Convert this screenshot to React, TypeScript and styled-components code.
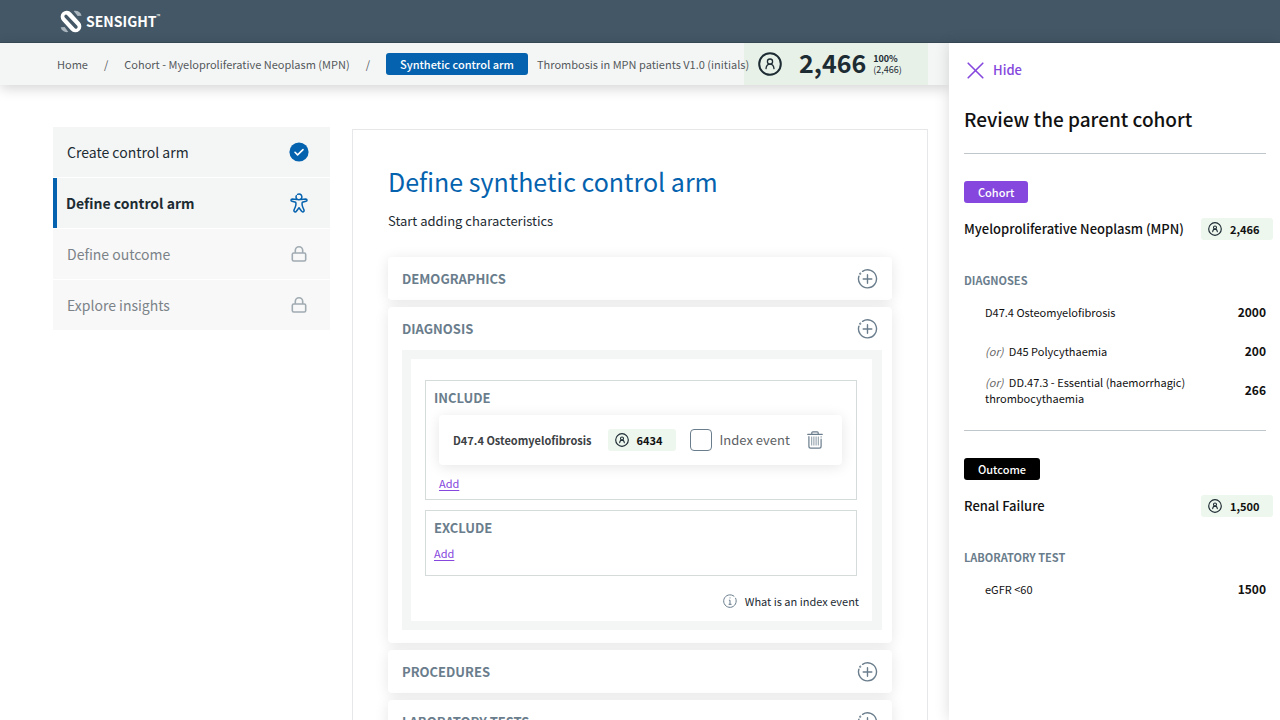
import React from 'react';
import styled, { createGlobalStyle, css } from 'styled-components';

const color = {
  header: '#435766',
  blue: '#0562ae',
  purple: '#8547dd',
  ink: '#1d2b33',
  slate: '#6a7d8c',
  mist: '#f4f6f6',
  mint: '#edf7ed',
  rule: '#bfc7ca',
};

const GlobalStyle = createGlobalStyle`
  *, *::before, *::after { box-sizing: border-box; }
  body {
    margin: 0;
    background: #fff;
    color: ${color.ink};
    font-family: 'Noto Sans CJK SC', 'Noto Sans', sans-serif;
    font-size: 11px;
    line-height: 16px;
  }
  h1, h2, h3, h4, p, ul, ol { margin: 0; padding: 0; }
  ul, ol { list-style: none; }
  a { color: inherit; text-decoration: none; }
  button {
    font: inherit;
    color: inherit;
    background: none;
    border: 0;
    padding: 0;
    cursor: pointer;
    text-align: left;
  }
  svg { display: block; flex: none; }
`;

const Shell = styled.div`
  display: grid;
  grid-template-rows: auto minmax(0, 1fr);
  height: 100vh;
`;

const Header = styled.header`
  display: flex;
  align-items: center;
  height: 43px;
  padding-left: 60px;
  background: ${color.header};
  border-bottom: 1px solid #3a4c59;
`;

const Brand = styled.a`
  display: flex;
  align-items: center;
  gap: 4px;
  color: #fff;
  font-size: 14px;
  font-weight: 700;
`;

const Trademark = styled.sup`
  align-self: flex-start;
  margin-left: -4px;
  font-size: 5px;
  line-height: 12px;
  font-weight: 400;
`;

const Body = styled.div`
  display: grid;
  grid-template-columns: minmax(0, 1fr) 331px;
  min-height: 0;
`;

const Workspace = styled.div`
  display: flex;
  flex-direction: column;
  min-height: 0;
`;

const TopBar = styled.div`
  display: flex;
  align-items: stretch;
  flex: none;
  height: 42px;
  padding: 0 21px 0 57px;
  background: ${color.mist};
  box-shadow: 0 3px 14px rgba(0, 0, 0, 0.18);
  z-index: 1;
`;

const Crumbs = styled.ol`
  display: flex;
  align-items: center;
  flex: 1;
  min-width: 0;
  white-space: nowrap;
  color: #55595c;
  z-index: 1;
`;

const Separator = styled.li`
  padding: 0 16px;
`;

const Tag = styled.span<{ $bg: string }>`
  display: flex;
  align-items: center;
  width: fit-content;
  height: 22px;
  padding: 0 14px;
  border-radius: 3px;
  background: ${(p) => p.$bg};
  color: #fff;
  font-weight: 500;
`;

const CrumbTitle = styled.li`
  padding-left: 9px;
`;

const Total = styled.div`
  display: flex;
  align-items: center;
  flex: none;
  width: 184px;
  padding-left: 14px;
  background: #e7f1e8;
`;

const TotalNumber = styled.strong`
  margin: 0 7px 0 17px;
  padding-bottom: 4px;
  font-size: 25px;
  line-height: 36px;
`;

const TotalShare = styled.span`
  display: flex;
  flex-direction: column;
  font-size: 9px;
  line-height: 11px;
`;

const Content = styled.main`
  display: flex;
  align-items: flex-start;
  flex: 1;
  gap: 22px;
  min-height: 0;
  padding: 42px 21px 0 53px;
  overflow-y: auto;
  scrollbar-width: none;
`;

const Steps = styled.nav`
  display: flex;
  flex-direction: column;
  flex: none;
  gap: 1px;
  width: 277px;
`;

const Step = styled.a<{ $state: 'done' | 'active' | 'locked' }>`
  display: flex;
  align-items: center;
  justify-content: space-between;
  height: 50px;
  padding: 0 20px 0 14px;
  background: ${color.mist};
  font-size: 14px;
  ${(p) =>
    p.$state === 'active' &&
    css`
      padding-left: 9px;
      border-left: 4px solid ${color.blue};
      font-weight: 700;
    `}
  ${(p) =>
    p.$state === 'locked' &&
    css`
      background: #f8f8f8;
      color: #7b8388;
    `}
`;

const StepIcon = styled.span`
  display: flex;
  justify-content: center;
  width: 22px;
`;

const Card = styled.section`
  flex: 1;
  min-width: 0;
  margin-top: 2px;
  padding: 35px 35px 40px;
  border: 1px solid #e5e7e8;
`;

const Title = styled.h1`
  color: ${color.blue};
  font-size: 25px;
  line-height: 32px;
  font-weight: 400;
`;

const Lead = styled.p`
  padding: 16px 0 28px;
  font-size: 13px;
`;

const Accordion = styled.div`
  display: flex;
  flex-direction: column;
  gap: 7px;
`;

const Section = styled.section`
  border-radius: 4px;
  background: #fff;
  box-shadow: 0 2px 14px rgba(0, 0, 0, 0.1);
`;

const SectionHeader = styled.button`
  display: flex;
  align-items: center;
  justify-content: space-between;
  width: 100%;
  height: 43px;
  padding: 0 14px;
  color: ${color.slate};
  font-size: 13px;
  font-weight: 700;
`;

const Frame = styled.div`
  margin: 0 10px 0 14px;
  padding: 21px 15px 12px 14px;
  border: solid ${color.mist};
  border-width: 9px 10px 9px 9px;
`;

const SectionBody = styled.div`
  padding-bottom: 13px;
`;

const Criteria = styled.section`
  display: flex;
  flex-direction: column;
  align-items: flex-start;
  padding: 8px;
  border: 1px solid #d5dadb;
  & + & {
    margin-top: 10px;
    padding-bottom: 14px;
  }
`;

const CriteriaTitle = styled.h3`
  padding-bottom: 8px;
  color: ${color.slate};
  font-size: 13px;
  line-height: 18px;
`;

const CriteriaList = styled.div`
  align-self: stretch;
  padding: 0 6px 0 5px;
`;

const CriteriaItem = styled.div`
  display: flex;
  align-items: center;
  height: 50px;
  margin-bottom: 10px;
  padding: 0 19px 0 14px;
  border-radius: 4px;
  background: #fff;
  box-shadow: 0 2px 14px rgba(0, 0, 0, 0.1);
`;

const ItemName = styled.strong`
  margin-right: 16px;
  color: #3c4144;
`;

const Count = styled.span`
  display: inline-flex;
  align-items: center;
  justify-content: space-between;
  flex: none;
  height: 22px;
  padding: 0 14px 0 7px;
  gap: 8px;
  border-radius: 3px;
  background: ${color.mint};
  color: #111;
  font-weight: 700;
`;

const PanelCount = styled(Count)`
  width: 72px;
`;

const CheckLabel = styled.label`
  display: flex;
  align-items: center;
  flex: 1;
  gap: 7px;
  margin-left: 14px;
  color: #5c6164;
  font-size: 13px;
`;

const Checkbox = styled.input`
  appearance: none;
  width: 22px;
  height: 22px;
  margin: 0;
  border: 1px solid ${color.slate};
  border-radius: 4px;
  background: #fff;
  &:checked {
    background: ${color.blue};
  }
`;

const AddLink = styled.button`
  display: block;
  color: ${color.purple};
  text-decoration: underline;
  text-underline-offset: 2px;
`;

const HelpRow = styled.div`
  display: flex;
  justify-content: flex-end;
  margin: 17px -2px 0 0;
`;

const HelpLink = styled.button`
  display: flex;
  align-items: center;
  gap: 8px;
`;

const Panel = styled.aside`
  display: flex;
  flex-direction: column;
  align-items: flex-start;
  padding: 18px 14px 20px 15px;
  overflow-y: auto;
  scrollbar-width: none;
  background: #fff;
  box-shadow: 0 0 14px rgba(0, 0, 0, 0.14);
  color: #111;
  z-index: 2;
`;

const HideButton = styled.button`
  display: flex;
  align-items: center;
  gap: 9px;
  padding-left: 3px;
  color: ${color.purple};
  font-size: 13px;
  line-height: 18px;
  font-weight: 500;
`;

const PanelTitle = styled.h2`
  align-self: stretch;
  padding: 25px 0 19px;
  font-size: 19px;
  line-height: 30px;
  font-weight: 500;
`;

const Group = styled.section`
  align-self: stretch;
  padding: 27px 0 21px;
  border-top: 1px solid ${color.rule};
`;

const GroupHead = styled.div`
  display: flex;
  align-items: center;
  justify-content: space-between;
  margin: 15px -7px 0 0;
`;

const GroupName = styled.h3`
  font-size: 13px;
  font-weight: 500;
`;

const GroupLabel = styled.h4`
  padding: 32px 0 4px;
  color: ${color.slate};
`;

const Entries = styled.ul`
  padding-left: 21px;
`;

const Entry = styled.li`
  display: flex;
  align-items: center;
  justify-content: space-between;
  min-height: 39px;
`;

const EntryName = styled.span`
  max-width: 220px;
`;

const Or = styled.em`
  margin-right: 3px;
  color: #666;
`;

const EntryValue = styled.strong`
  font-size: 12px;
`;

const Logo = () => (
  <svg width="22" height="23" viewBox="0 0 66 69" aria-hidden="true">
    <path d="M41 3c12-2 20 4 24 14l-12 1z" fill="#a9b4bd" />
    <path d="M25 66C13 68 5 62 2 52l12-1z" fill="#a9b4bd" />
    <path d="M20 20l26 29" stroke="#fff" strokeWidth="36" strokeLinecap="round" />
    <path d="M18 19l30 32" stroke={color.header} strokeWidth="10" strokeLinecap="round" />
  </svg>
);

const PersonIcon = ({ size = 14, weight = 2 }: { size?: number; weight?: number }) => (
  <svg width={size} height={size} viewBox="0 0 24 24" fill="none" stroke="#1d2b33" strokeLinecap="round" aria-hidden="true">
    <circle cx="12" cy="12" r="10.8" strokeWidth={weight} />
    <circle cx="12" cy="9.600" r="2.600" strokeWidth={size > 20 ? 1.3 : 1.8} />
    <path d="M8 16.600c.3-2.800 1.900-4.400 4-4.400s3.700 1.600 4 4.400" strokeWidth={size > 20 ? 1.3 : 1.8} />
  </svg>
);

const CheckIcon = () => (
  <svg width="20" height="20" viewBox="0 0 20 20" fill="none" aria-hidden="true">
    <circle cx="10" cy="10" r="9.600" fill={color.blue} />
    <path d="M6 10.300l2.600 2.600L14 7.600" stroke="#fff" strokeWidth="1.600" strokeLinecap="round" strokeLinejoin="round" />
  </svg>
);

const FigureIcon = () => (
  <svg width="18" height="20" viewBox="0 0 18 20" fill="none" stroke={color.blue} strokeWidth="1.500" strokeLinecap="round" strokeLinejoin="round" aria-hidden="true">
    <path d="M7.600 1.300A2.900 2.900 0 1 1 6.300 2.700M7 6.500L2.300 6.100c-1.700 0-1.700 1.900-.2 2.200l3.600 1c.6 1.900.3 3-.4 4.700l-1.300 3c-.5 1.900 1.600 2.600 2.400 1.200L9 14.700l2.600 3.500c.9 1.400 2.900.7 2.400-1.200l-1.300-3c-.7-1.700-1-2.800-.4-4.700l3.600-1c1.500-.3 1.500-2.200-.2-2.200l-4.700.4" />
  </svg>
);

const LockIcon = () => (
  <svg width="16" height="16" viewBox="0 0 16 16" fill="none" stroke="#a0abb2" strokeWidth="1.600" strokeLinejoin="round" aria-hidden="true">
    <rect x="1.300" y="7" width="13.400" height="8" rx="1.500" />
    <path d="M4.300 7V4.500a3.700 3.700 0 0 1 7.400 0V7" />
  </svg>
);

const PlusIcon = () => (
  <svg width="21" height="20" viewBox="0 0 21 20" fill="none" stroke={color.slate} strokeWidth="1.400" strokeLinecap="round" aria-hidden="true">
    <path d="M5.600 2.300A9 9 0 1 1 1.900 7.200M10.500 5.700v8.600M6.200 10h8.600" />
    <circle cx="3.200" cy="4.700" r=".4" />
  </svg>
);

const TrashIcon = () => (
  <svg width="16" height="18" viewBox="0 0 16 18" fill="none" stroke={color.slate} strokeWidth="1.200" strokeLinecap="round" aria-hidden="true">
    <path d="M.7 3.300h14.600M4.800 3V1.800c0-.6.4-1 1-1h4.400c.6 0 1 .4 1 1V3M1.900 5.700v9.600c0 1.200.7 1.900 1.900 1.900h8.400c1.200 0 1.900-.7 1.900-1.900V8.200M14.100 5.800v.1" />
    <path d="M4.700 5.900v8.200M6.900 5.900v8.200M9.100 5.900v8.200M11.300 5.900v8.200" strokeWidth=".8" />
  </svg>
);

const InfoIcon = () => (
  <svg width="14" height="14" viewBox="0 0 14 14" fill="none" stroke={color.slate} strokeLinecap="round" aria-hidden="true">
    <path d="M11 2.200A6.300 6.300 0 1 0 12.600 4.200" />
    <path d="M6.300 6.200H7v4M6 10.300h2.200M7 3.800v.2" />
  </svg>
);

const CloseIcon = () => (
  <svg width="17" height="17" viewBox="0 0 17 17" stroke={color.purple} strokeWidth="1.600" strokeLinecap="round" aria-hidden="true">
    <path d="M1.200 1.200l14.600 14.600M15.800 1.200L1.200 15.800" />
  </svg>
);

type StepState = 'done' | 'active' | 'locked';

const steps: { label: string; state: StepState }[] = [
  { label: 'Create control arm', state: 'done' },
  { label: 'Define control arm', state: 'active' },
  { label: 'Define outcome', state: 'locked' },
  { label: 'Explore insights', state: 'locked' },
];

const stepIcons: Record<StepState, React.ReactNode> = {
  done: <CheckIcon />,
  active: <FigureIcon />,
  locked: <LockIcon />,
};

const groups = [
  {
    tag: 'Cohort',
    bg: color.purple,
    name: 'Myeloproliferative Neoplasm (MPN)',
    count: '2,466',
    label: 'DIAGNOSES',
    entries: [
      { name: 'D47.4 Osteomyelofibrosis', value: '2000' },
      { or: true, name: 'D45 Polycythaemia', value: '200' },
      { or: true, name: 'DD.47.3 - Essential (haemorrhagic) thrombocythaemia', value: '266' },
    ],
  },
  {
    tag: 'Outcome',
    bg: '#000',
    name: 'Renal Failure',
    count: '1,500',
    label: 'LABORATORY TEST',
    entries: [{ name: 'eGFR <60', value: '1500' }],
  },
];

const AccordionSection = ({ title, children }: { title: string; children?: React.ReactNode }) => (
  <Section>
    <h2>
      <SectionHeader type="button" aria-expanded={Boolean(children)}>
        {title}
        <PlusIcon />
      </SectionHeader>
    </h2>
    {children && <SectionBody>{children}</SectionBody>}
  </Section>
);

export default function App() {
  return (
    <Shell>
      <GlobalStyle />
      <Header>
        <Brand href="#">
          <Logo />
          SENSIGHT
          <Trademark>™</Trademark>
        </Brand>
      </Header>
      <Body>
        <Workspace>
          <TopBar>
            <Crumbs>
              <li><a href="#">Home</a></li>
              <Separator aria-hidden="true">/</Separator>
              <li><a href="#">Cohort - Myeloproliferative Neoplasm (MPN)</a></li>
              <Separator aria-hidden="true">/</Separator>
              <li><Tag $bg={color.blue}>Synthetic control arm</Tag></li>
              <CrumbTitle>Thrombosis in MPN patients V1.0 (initials)</CrumbTitle>
            </Crumbs>
            <Total>
              <PersonIcon size={24} />
              <TotalNumber>2,466</TotalNumber>
              <TotalShare>
                <strong>100%</strong>
                <span>(2,466)</span>
              </TotalShare>
            </Total>
          </TopBar>
          <Content>
            <Steps aria-label="Steps">
              {steps.map((step) => (
                <Step key={step.label} href="#" $state={step.state}>
                  {step.label}
                  <StepIcon>{stepIcons[step.state]}</StepIcon>
                </Step>
              ))}
            </Steps>
            <Card>
              <Title>Define synthetic control arm</Title>
              <Lead>Start adding characteristics</Lead>
              <Accordion>
                <AccordionSection title="DEMOGRAPHICS" />
                <AccordionSection title="DIAGNOSIS">
                  <Frame>
                    <Criteria>
                      <CriteriaTitle>INCLUDE</CriteriaTitle>
                      <CriteriaList>
                        <CriteriaItem>
                          <ItemName>D47.4 Osteomyelofibrosis</ItemName>
                          <Count><PersonIcon />6434</Count>
                          <CheckLabel>
                            <Checkbox type="checkbox" />
                            Index event
                          </CheckLabel>
                          <button type="button" aria-label="Delete"><TrashIcon /></button>
                        </CriteriaItem>
                        <AddLink type="button">Add</AddLink>
                      </CriteriaList>
                    </Criteria>
                    <Criteria>
                      <CriteriaTitle>EXCLUDE</CriteriaTitle>
                      <AddLink type="button">Add</AddLink>
                    </Criteria>
                    <HelpRow>
                      <HelpLink type="button"><InfoIcon />What is an index event</HelpLink>
                    </HelpRow>
                  </Frame>
                </AccordionSection>
                <AccordionSection title="PROCEDURES" />
                <AccordionSection title="LABORATORY TESTS" />
              </Accordion>
            </Card>
          </Content>
        </Workspace>
        <Panel>
          <HideButton type="button"><CloseIcon />Hide</HideButton>
          <PanelTitle>Review the parent cohort</PanelTitle>
          {groups.map((group) => (
            <Group key={group.tag}>
              <Tag $bg={group.bg}>{group.tag}</Tag>
              <GroupHead>
                <GroupName>{group.name}</GroupName>
                <PanelCount><PersonIcon />{group.count}</PanelCount>
              </GroupHead>
              <GroupLabel>{group.label}</GroupLabel>
              <Entries>
                {group.entries.map((entry) => (
                  <Entry key={entry.name}>
                    <EntryName>
                      {'or' in entry && <><Or>(or)</Or>{' '}</>}
                      {entry.name}
                    </EntryName>
                    <EntryValue>{entry.value}</EntryValue>
                  </Entry>
                ))}
              </Entries>
            </Group>
          ))}
        </Panel>
      </Body>
    </Shell>
  );
}
